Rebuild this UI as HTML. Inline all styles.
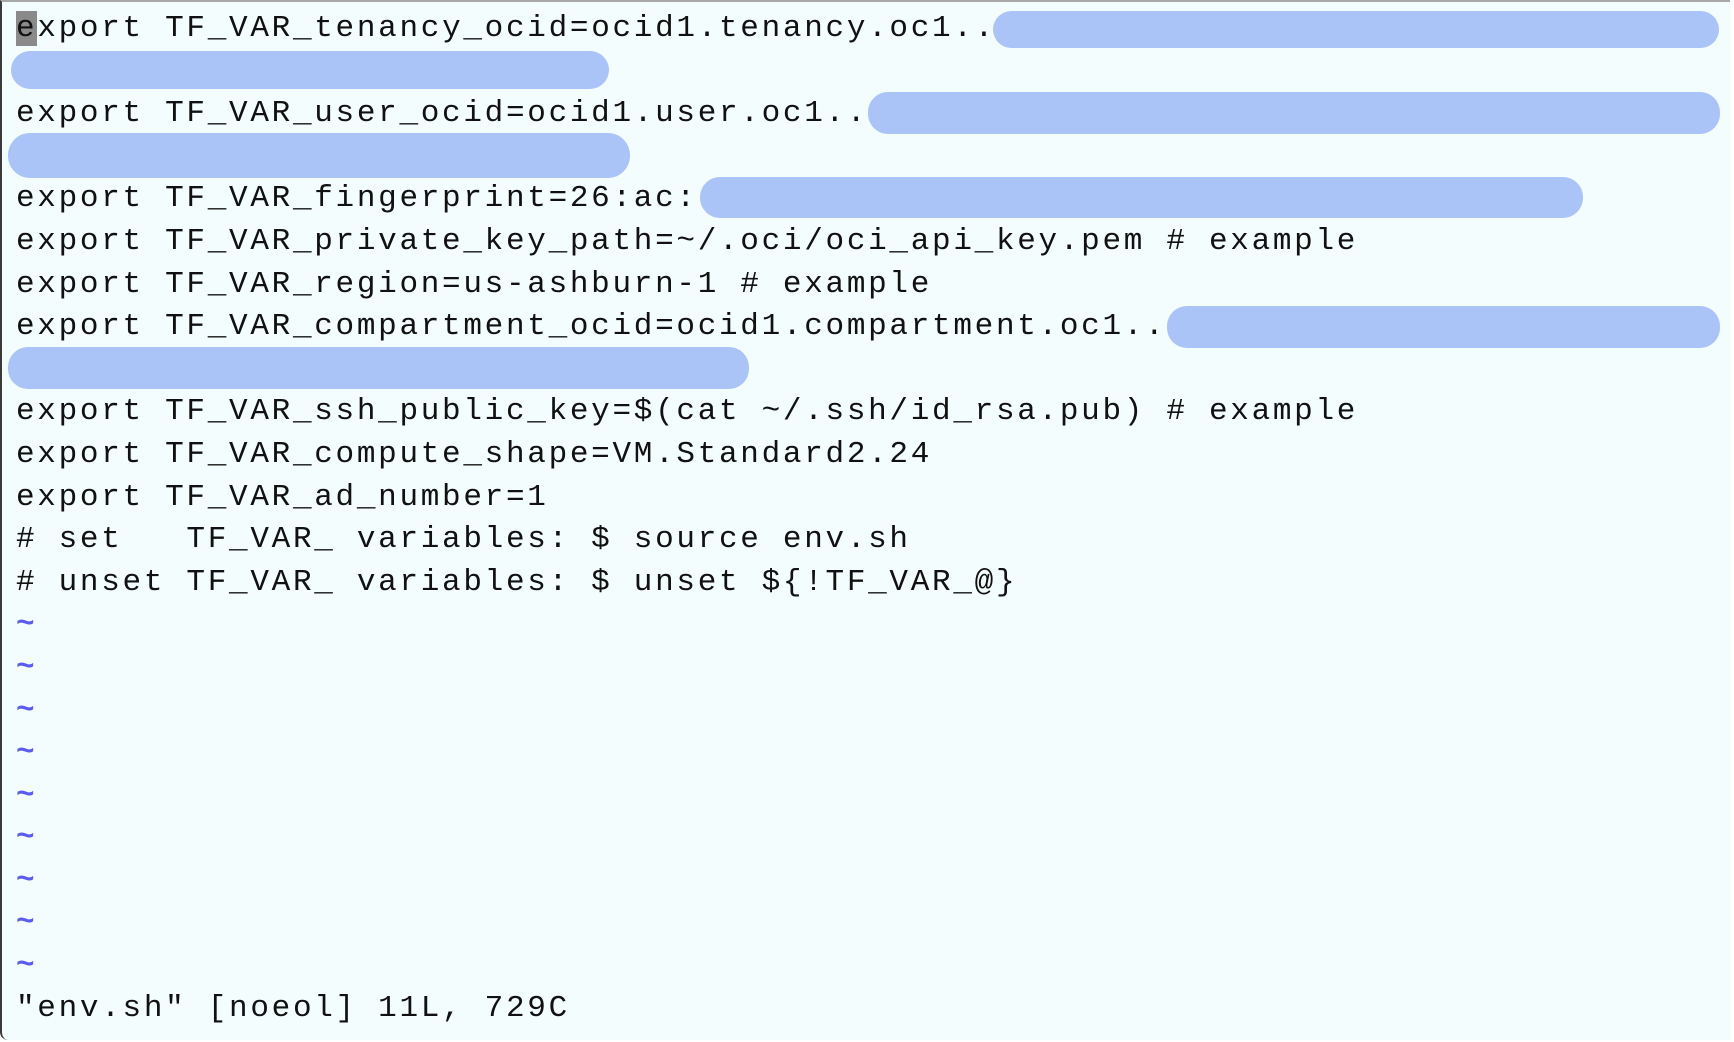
<!DOCTYPE html>
<html><head><meta charset="utf-8"><style>
html,body{margin:0;padding:0;width:1734px;height:1042px;overflow:hidden;background:#fff}
#t{position:absolute;left:0;top:0;width:1730px;height:1040px;background:#f4fdfe;border-top:2px solid #a8a8a8;border-left:2px solid #3a3a3a;border-bottom-left-radius:8px;box-sizing:border-box}
pre{position:absolute;left:16px;top:8px;margin:0;font-family:"Liberation Mono",monospace;font-size:31px;line-height:42.6px;color:#111;letter-spacing:2.7px}
.tl{color:#5a5cf0;font-weight:bold}
.cur{background:#8a8a8a}
.b{position:absolute;background:#abc4f7;border-radius:20px}
</style></head><body>
<div id="t"></div>
<pre><span class="cur">e</span>xport TF_VAR_tenancy_ocid=ocid1.tenancy.oc1..

export TF_VAR_user_ocid=ocid1.user.oc1..

export TF_VAR_fingerprint=26:ac:
export TF_VAR_private_key_path=~/.oci/oci_api_key.pem # example
export TF_VAR_region=us-ashburn-1 # example
export TF_VAR_compartment_ocid=ocid1.compartment.oc1..

export TF_VAR_ssh_public_key=$(cat ~/.ssh/id_rsa.pub) # example
export TF_VAR_compute_shape=VM.Standard2.24
export TF_VAR_ad_number=1
# set   TF_VAR_ variables: $ source env.sh
# unset TF_VAR_ variables: $ unset ${!TF_VAR_@}
<span class="tl">~</span>
<span class="tl">~</span>
<span class="tl">~</span>
<span class="tl">~</span>
<span class="tl">~</span>
<span class="tl">~</span>
<span class="tl">~</span>
<span class="tl">~</span>
<span class="tl">~</span>
"env.sh" [noeol] 11L, 729C</pre>
<div class="b" style="left:993px;top:11px;width:726px;height:37px"></div>
<div class="b" style="left:11px;top:51px;width:598px;height:38px"></div>
<div class="b" style="left:868px;top:92px;width:852px;height:42px"></div>
<div class="b" style="left:8px;top:133px;width:622px;height:45px;border-radius:22px"></div>
<div class="b" style="left:700px;top:177px;width:883px;height:41px"></div>
<div class="b" style="left:1167px;top:306px;width:553px;height:42px"></div>
<div class="b" style="left:8px;top:347px;width:741px;height:42px"></div>
</body></html>
